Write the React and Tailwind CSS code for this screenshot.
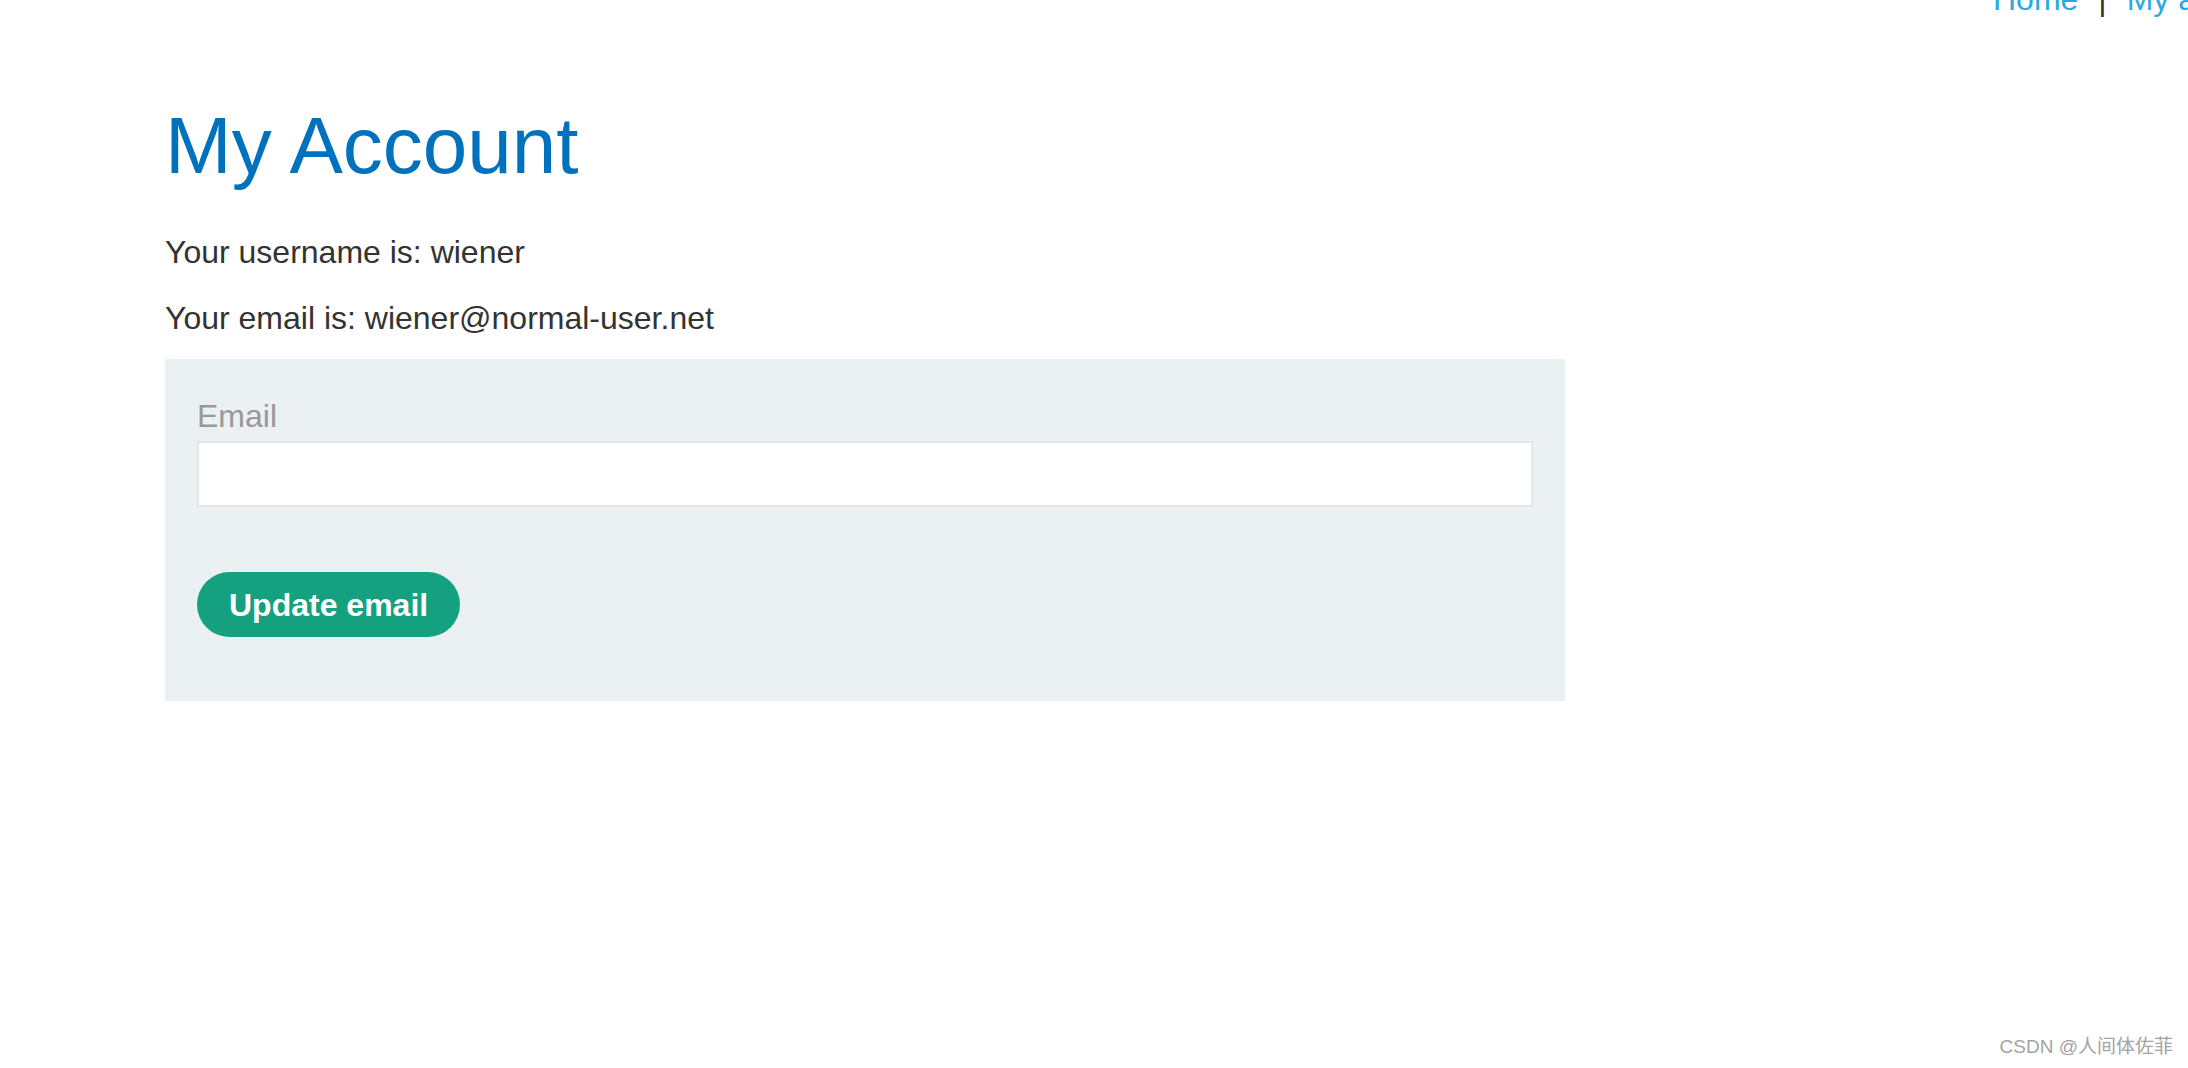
export default function App() {
  return (
    <div className="relative min-h-screen w-full overflow-hidden bg-white text-[#333332] font-['Liberation_Sans',Arial,sans-serif]">
      <header className="-mt-[19px] flex whitespace-nowrap pl-[1993px] text-[32px] leading-[37px]">
        <nav className="flex gap-[20px]">
          <a href="#" className="text-[#29abe2]">Home</a>
          <span>|</span>
          <a href="#" className="text-[#29abe2]">My account</a>
        </nav>
      </header>

      <main className="ml-[165px] mt-[82px] w-[1400px]">
        <h1 className="text-[80px] leading-[92px] font-normal text-[#0071bc]">My Account</h1>
        <p className="mt-[40px] text-[32px] leading-[40px]">Your username is: wiener</p>
        <p className="mt-[26px] text-[32px] leading-[40px]">Your email is: wiener@normal-user.net</p>

        <form className="mt-[21px] bg-[#ebf0f2] px-[32px] pt-[37px] pb-[64px]">
          <label className="block text-[32px] leading-[40px] text-[#999999]">Email</label>
          <input
            type="email"
            name="email"
            className="mt-[5px] block h-[66px] w-full border-2 border-[#e3e6e8] bg-white px-3 text-[32px] outline-none"
          />
          <button
            type="button"
            className="mt-[65px] h-[65px] rounded-full bg-[#15a080] px-[32px] text-[32px] font-bold leading-none text-white"
          >
            Update email
          </button>
        </form>
      </main>

      <div className="absolute bottom-[9px] right-[15px] text-[19px] leading-[24px] text-[#a3a3a3] font-['Liberation_Sans','Noto_Sans_CJK_SC',sans-serif]">
        CSDN @人间体佐菲
      </div>
    </div>
  );
}
